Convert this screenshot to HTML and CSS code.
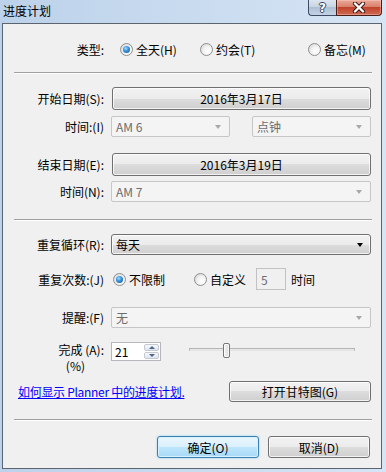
FILE: index.html
```html
<!DOCTYPE html>
<html lang="zh-CN">
<head>
    <meta charset="UTF-8">
    <meta name="viewport" content="width=device-width, initial-scale=1.0">
    <title>进度计划</title>
    <link rel="stylesheet" href="styles.css">
</head>
<body>

    <div class="window">
        <div class="titlebar">
            <span class="title">进度计划</span>
            <div class="caption">
                <span class="cap-btn help">?</span>
                <span class="cap-btn close">
                    <svg width="16" height="11" viewBox="0 0 16 11">
                        <path d="M4 1.5 L12 9.5 M12 1.5 L4 9.5" stroke="#3a1510" stroke-width="4.2" stroke-linecap="round"/>
                        <path d="M4 1.5 L12 9.5 M12 1.5 L4 9.5" stroke="#ffffff" stroke-width="2.4" stroke-linecap="round"/>
                    </svg>
                </span>
            </div>
        </div>

        <div class="client">
            <div class="row type-row">
                <span class="lbl">类型:</span>
                <label class="opt opt-all"><span class="radio on"></span>全天(H)</label>
                <label class="opt opt-meet"><span class="radio"></span>约会(T)</label>
                <label class="opt"><span class="radio"></span>备忘(M)</label>
            </div>

            <div class="sep sep-first"></div>

            <div class="row date-row">
                <span class="lbl">开始日期(S):</span>
                <button class="btn wide">2016年3月17日</button>
            </div>
            <div class="row combo-row time-row">
                <span class="lbl">时间:(I)</span>
                <div class="combo disabled">AM 6<span class="arrow"></span></div>
                <div class="combo disabled">点钟<span class="arrow"></span></div>
            </div>

            <div class="row date-row end-row">
                <span class="lbl">结束日期(E):</span>
                <button class="btn wide">2016年3月19日</button>
            </div>
            <div class="row combo-row time-row">
                <span class="lbl">时间(N):</span>
                <div class="combo disabled">AM 7<span class="arrow"></span></div>
            </div>

            <div class="sep sep-mid"></div>

            <div class="row combo-row repeat-row">
                <span class="lbl">重复循环(R):</span>
                <div class="combo active">每天<span class="arrow"></span></div>
            </div>

            <div class="row count-row">
                <span class="lbl">重复次数:(J)</span>
                <label class="opt opt-nolimit"><span class="radio on"></span>不限制</label>
                <label class="opt"><span class="radio"></span>自定义</label>
                <div class="textbox disabled">5</div>
                <span class="unit">时间</span>
            </div>

            <div class="row combo-row remind-row">
                <span class="lbl">提醒:(F)</span>
                <div class="combo disabled">无<span class="arrow"></span></div>
            </div>

            <div class="row done-row">
                <div class="lbl done-lbl">
                    <span class="line1">完成 (A):</span>
                    <span class="line2">(%)</span>
                </div>
                <div class="spin">
                    <span class="spin-val">21</span>
                    <div class="spin-btns">
                        <span class="spin-btn up"></span>
                        <span class="spin-btn down"></span>
                    </div>
                </div>
                <div class="slider">
                    <div class="track"></div>
                    <div class="thumb" style="left: 34px"></div>
                </div>
            </div>

            <div class="row link-row">
                <a class="link" href="#">如何显示 Planner 中的进度计划.</a>
                <button class="btn gantt">打开甘特图(G)</button>
            </div>

            <div class="sep sep-last"></div>

            <div class="row footer">
                <button class="btn default">确定(O)</button>
                <button class="btn">取消(D)</button>
            </div>
        </div>
    </div>

</body>
</html>
```

FILE: styles.css
```css
* {
    margin: 0;
    padding: 0;
    box-sizing: border-box;
}

body {
    font-family: "Noto Sans CJK SC", "Noto Sans", sans-serif;
    font-size: 12px;
    color: #000;
    background: #c6d9ee;
}

.window {
    width: 386px;
    height: 472px;
    background: linear-gradient(90deg, #bcd2ea 0%, #c9dbef 50%, #d6e5f5 100%);
}

/* title bar */
.titlebar {
    display: flex;
    height: 23px;
}

.title {
    margin: 3px 0 0 3px;
    line-height: 16px;
    font-size: 12px;
}

.caption {
    display: flex;
    margin-left: auto;
    margin-right: 4px;
    height: 16px;
}

.cap-btn {
    display: flex;
    align-items: center;
    justify-content: center;
    height: 16px;
    border: 1px solid #3d4c63;
    border-top: none;
}

.help {
    width: 28px;
    border-right: none;
    border-radius: 0 0 0 4px;
    background: linear-gradient(#dce5f0 0%, #c8d5e4 45%, #b0c0d4 50%, #c3d2e4 100%);
    color: #fff;
    font-family: "DejaVu Sans", sans-serif;
    font-weight: bold;
    font-size: 12px;
    text-shadow: 1px 0 0 #33425a, -1px 0 0 #33425a, 0 1px 0 #33425a, 0 -1px 0 #33425a;
}

.close {
    width: 46px;
    border-color: #4a1e17;
    border-radius: 0 0 4px 0;
    background: linear-gradient(#eaa898 0%, #d8826d 45%, #c2432c 50%, #cf6a52 100%);
    box-shadow: inset 0 0 0 1px rgba(255, 210, 200, 0.4);
}

/* client area */
.client {
    height: 446px;
    margin: 0 4px 0 2px;
    border: 1px solid #5c6470;
    background-color: #f0f0f0;
    padding: 15px 10px 0 11px;
}

.row {
    display: flex;
    align-items: center;
}

.lbl {
    flex: none;
    width: 97px;
    padding-right: 7px;
    text-align: right;
    white-space: nowrap;
}

.sep {
    height: 2px;
    margin-right: -1px;
    border-top: 1px solid #a0a0a0;
    border-bottom: 1px solid #fff;
}

/* radios */
.opt {
    display: flex;
    align-items: center;
    white-space: nowrap;
}

.radio {
    flex: none;
    display: flex;
    align-items: center;
    justify-content: center;
    width: 13px;
    height: 13px;
    margin-right: 3px;
    border-radius: 50%;
    border: 1px solid #8e8f8f;
    background: radial-gradient(circle at 65% 65%, #ffffff 0%, #f2f2f2 45%, #cdcdcd 100%);
}

.radio.on::after {
    content: '';
    width: 7px;
    height: 7px;
    border-radius: 50%;
    background: radial-gradient(circle at 40% 35%, #a6e0ff 0%, #3a95dc 40%, #0f4f92 100%);
}

.type-row {
    height: 20px;
}

.opt-all {
    margin-left: 9px;
    width: 80px;
}

.opt-meet {
    width: 108px;
}

.sep-first {
    margin-top: 13px;
}

/* buttons */
.btn {
    font-family: inherit;
    font-size: 12px;
    color: #000;
    border: 1px solid #707070;
    border-radius: 3px;
    background: linear-gradient(#f2f2f2 0%, #ebebeb 50%, #dddddd 50%, #cfcfcf 100%);
    box-shadow: inset 0 0 0 1px rgba(255, 255, 255, 0.75);
    cursor: pointer;
}

.btn.wide {
    flex: 1;
    height: 23px;
    margin-left: 1px;
}

.date-row {
    margin-top: 13px;
}

.end-row {
    margin-top: 16px;
}

/* combos */
.combo {
    position: relative;
    flex: 1;
    display: flex;
    align-items: center;
    height: 21px;
    padding-left: 4px;
    border-radius: 2px;
    white-space: nowrap;
}

.combo-row {
    gap: 22px;
}

.combo-row .lbl {
    margin-right: -22px;
}

.combo .arrow {
    position: absolute;
    right: 7px;
    top: 8px;
    border-left: 3.5px solid transparent;
    border-right: 3.5px solid transparent;
    border-top: 4px solid #000;
}

.combo.disabled {
    border: 1px solid #c6c6c6;
    background-color: #f4f4f4;
    color: #6d6d6d;
}

.combo.disabled .arrow {
    border-top-color: #a8a8a8;
    right: 8px;
}

.combo.active {
    border: 1px solid #707070;
    border-radius: 3px;
    background: linear-gradient(#f2f2f2 0%, #ebebeb 50%, #dddddd 50%, #cfcfcf 100%);
    box-shadow: inset 0 0 0 1px rgba(255, 255, 255, 0.75);
}

.time-row {
    margin-top: 6px;
}

.end-row + .time-row {
    margin-top: 5px;
}

.sep-mid {
    margin-top: 17px;
}

.repeat-row {
    margin-top: 13px;
}

/* repeat count */
.count-row {
    height: 22px;
    margin-top: 13px;
}

.opt-nolimit {
    width: 81px;
    margin-left: 2px;
}

.textbox {
    display: flex;
    align-items: center;
    width: 30px;
    height: 22px;
    margin-left: 10px;
    padding-left: 4px;
    border: 1px solid #c2c2c2;
    background-color: #f0f0f0;
    color: #6d6d6d;
}

.unit {
    margin-left: 5px;
}

.remind-row {
    margin-top: 17px;
}

/* complete */
.done-row {
    align-items: flex-start;
    margin-top: 14px;
}

.done-lbl {
    display: flex;
    flex-direction: column;
    line-height: 16px;
}

.done-lbl .line2 {
    padding-right: 19px;
}

.spin {
    display: flex;
    width: 50px;
    height: 19px;
    border: 1px solid #b5b7bc;
    background-color: #fff;
}

.spin-val {
    padding: 1px 0 0 3px;
    line-height: 15px;
}

.spin-btns {
    display: flex;
    flex-direction: column;
    margin: 1px 1px 1px auto;
    width: 15px;
    gap: 1px;
}

.spin-btn {
    flex: 1;
    display: flex;
    align-items: center;
    justify-content: center;
    border: 1px solid #c5cad2;
    border-radius: 2px;
    background: linear-gradient(#f7f9fc, #dfe5ee);
}

.spin-btn::after {
    content: '';
    border-left: 3px solid transparent;
    border-right: 3px solid transparent;
}

.spin-btn.up::after {
    border-bottom: 3px solid #4d648c;
}

.spin-btn.down::after {
    border-top: 3px solid #4d648c;
}

.slider {
    position: relative;
    width: 166px;
    height: 19px;
    margin-left: 28px;
}

.track {
    margin-top: 6px;
    height: 3px;
    border: 1px solid #b4b4b4;
    border-bottom-color: #e4e4e4;
    background-color: #e7eaea;
}

.thumb {
    position: absolute;
    top: 1px;
    width: 7px;
    height: 15px;
    border: 1px solid #767676;
    border-radius: 2px;
    background: linear-gradient(90deg, #f4f4f4, #dadada);
    box-shadow: inset 0 0 0 1px rgba(255, 255, 255, 0.8);
}

/* link + gantt */
.link-row {
    margin-top: 7px;
}

.link {
    margin-left: 4px;
    color: #0000ff;
    text-decoration: underline;
    letter-spacing: -0.3px;
}

.btn.gantt {
    width: 142px;
    height: 21px;
    margin-left: auto;
}

.sep-last {
    margin-top: 17px;
}

/* footer */
.footer {
    justify-content: flex-end;
    gap: 9px;
    margin-top: 15px;
    padding-right: 1px;
}

.footer .btn {
    width: 102px;
    height: 22px;
}

.btn.default {
    border-color: #3c7fb1;
    background: linear-gradient(#eaf6fd 0%, #d9f0fc 50%, #bee6fd 50%, #a7d9f5 100%);
    box-shadow: inset 0 0 0 1px #d6f0fd, 0 0 2px #7ccaf0;
}
```
